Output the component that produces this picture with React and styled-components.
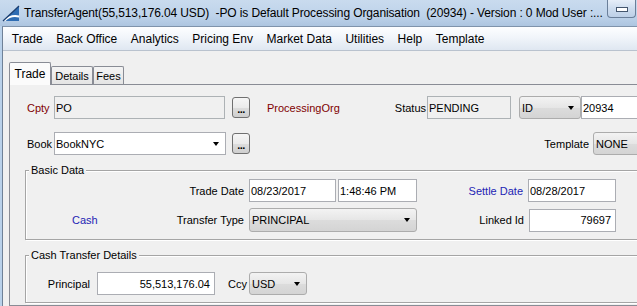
import React from 'react'
import styled, { createGlobalStyle, css } from 'styled-components'

const GlobalStyle = createGlobalStyle`
  html, body {
    margin: 0;
    padding: 0;
    background: #f0f0f0;
    overflow: hidden;
  }
  #root {
    width: 637px;
    height: 306px;
  }
`

const Window = styled.div`
  width: 637px;
  height: 306px;
  overflow: hidden;
  display: flex;
  flex-direction: column;
  background: #b9d1ea;
  font-family: "Liberation Sans", Arial, sans-serif;
  color: #000;
`

const TitleBar = styled.div`
  height: 26px;
  flex-shrink: 0;
  display: flex;
  align-items: center;
  background: linear-gradient(#c9dbee, #bed3ea 60%, #adc5e0);
`

const AppIcon = styled.svg`
  flex-shrink: 0;
  margin: 0 4px 0 2px;
`

const TitleText = styled.div`
  flex: 1;
  min-width: 0;
  font-size: 12px;
  letter-spacing: -0.12px;
  white-space: pre;
`

const CaptionButton = styled.div`
  flex-shrink: 0;
  align-self: flex-start;
  width: 29px;
  height: 18px;
  margin-right: 1px;
  box-sizing: border-box;
  border: 1px solid #6a7f99;
  border-top: none;
  border-radius: 0 0 4px 4px;
  background: linear-gradient(#e6eef8, #cddcee 50%, #bdd0e7);
  display: flex;
  align-items: flex-end;
  justify-content: center;
  padding-bottom: 5px;

  span {
    width: 10px;
    height: 3px;
    background: #fff;
    border: 1px solid #44566e;
  }
`

const Frame = styled.div`
  flex: 1;
  display: flex;
  padding-left: 2px;
  min-height: 0;
`

const Client = styled.div`
  flex: 1;
  min-width: 0;
  display: flex;
  flex-direction: column;
  background: #f0f0f0;
  border-left: 1px solid #6f8197;
  border-top: 1px solid #7f93ab;
`

const MenuBar = styled.div`
  height: 23px;
  flex-shrink: 0;
  display: flex;
  align-items: center;
  padding-left: 2px;
  border-bottom: 1px solid #b9c2ce;
  background: linear-gradient(#fdfeff, #f1f5fa 45%, #dfe7f1);
`

const MenuItem = styled.div`
  padding: 0 6.75px;
  font-size: 12px;
  white-space: nowrap;
`

const TabArea = styled.div`
  flex: 1;
  display: flex;
  flex-direction: column;
  padding: 11px 0 0 6px;
`

const TabStrip = styled.div`
  display: flex;
  align-items: flex-end;
`

const Tab = styled.div`
  box-sizing: border-box;
  width: ${p => p.$w}px;
  border: 1px solid #898c95;
  border-bottom: none;
  border-radius: 2px 2px 0 0;
  display: flex;
  align-items: center;
  justify-content: center;
  white-space: nowrap;
  ${p => p.$active ? css`
    height: 23px;
    margin-bottom: -1px;
    position: relative;
    z-index: 1;
    font-size: 12px;
    background: #fbfbfb;
  ` : css`
    height: 18px;
    font-size: 11px;
    background: linear-gradient(#f4f4f4, #e4e4e4);
  `}
`

const Panel = styled.div`
  flex: 1;
  width: 700px;
  border: 1px solid #898c95;
  border-right: none;
  background: #f0f0f0;
  padding-top: 11px;
  font-size: 11px;
`

const Row = styled.div`
  display: flex;
  align-items: center;
  height: ${p => p.$h || 23}px;
  margin-top: ${p => p.$mt || 0}px;
  padding-left: ${p => p.$pl || 0}px;
`

const tones = { red: '#800000', blue: '#1e1eb4', plain: '#000' }

const Label = styled.div`
  flex-shrink: 0;
  box-sizing: border-box;
  width: ${p => p.$w}px;
  margin-left: ${p => p.$ml || 0}px;
  text-align: ${p => (p.$right ? 'right' : 'left')};
  padding-right: ${p => (p.$right ? 1 : 0)}px;
  color: ${p => tones[p.$tone || 'plain']};
  white-space: nowrap;
`

const Field = styled.div`
  flex-shrink: 0;
  box-sizing: border-box;
  width: ${p => p.$w}px;
  height: ${p => p.$h || 23}px;
  margin-left: ${p => p.$ml || 0}px;
  padding: 0 4px 0 1px;
  display: flex;
  align-items: center;
  justify-content: ${p => (p.$right ? 'flex-end' : 'flex-start')};
  border: 1px solid ${p => (p.$disabled ? '#adb2b5' : '#abadb3')};
  background: ${p => (p.$disabled ? '#f0f0f0' : '#fff')};
  white-space: nowrap;
  overflow: hidden;
`

const Combo = styled.div`
  flex-shrink: 0;
  box-sizing: border-box;
  width: ${p => p.$w}px;
  height: ${p => p.$h || 23}px;
  margin-left: ${p => p.$ml || 0}px;
  padding: 0 6px 0 2px;
  display: flex;
  align-items: center;
  justify-content: space-between;
  white-space: nowrap;
  ${p => p.$editable ? css`
    border: 1px solid #abadb3;
    padding-left: 1px;
    background: #fff;
  ` : css`
    border: 1px solid #acacac;
    border-radius: 3px;
    background: linear-gradient(#f3f3f3, #e6e6e6 50%, #dcdcdc 52%, #d4d4d4);
  `}
`

const Arrow = styled.span`
  width: 0;
  height: 0;
  border-left: 3.5px solid transparent;
  border-right: 3.5px solid transparent;
  border-top: 4px solid #000;
`

const Ellipsis = styled.div`
  flex-shrink: 0;
  box-sizing: border-box;
  width: 18px;
  height: 21px;
  margin-left: ${p => p.$ml || 0}px;
  border: 1px solid #707070;
  border-radius: 3px;
  background: linear-gradient(#f6f6f6, #ebebeb 50%, #dddddd 52%, #cfcfcf);
  display: flex;
  align-items: center;
  justify-content: center;
  font-size: 11px;
  font-weight: bold;
  letter-spacing: -0.5px;
  line-height: 1;
  padding-top: 3px;
`

const Group = styled.fieldset`
  width: 640px;
  margin: 9px 0 0 15px;
  padding: ${p => p.$pad};
  min-width: 0;
  border: 1px solid #a5a5a5;
  box-shadow: inset 1px 1px 0 #fff, 1px 1px 0 #fff;
`

const Legend = styled.legend`
  margin-left: 3px;
  padding: 0 2px 0 2px;
  font-size: 11px;
  line-height: 13px;
  background: #f0f0f0;
`

function AppLogo() {
  return (
    <AppIcon width="18" height="18" viewBox="0 0 18 18">
      <path d="M1 17 L17 2 L17 17 Z" fill="#2f6db3" />
      <path d="M1 17 Q8 9.5 17 11.5 L17 13.5 Q9 11.5 3.5 17 Z" fill="#ffffff" />
      <path d="M1 17 L17 2" stroke="#1b3d6e" strokeWidth="1.2" />
    </AppIcon>
  )
}

const menus = ['Trade', 'Back Office', 'Analytics', 'Pricing Env', 'Market Data', 'Utilities', 'Help', 'Template']

export default function App() {
  return (
    <>
      <GlobalStyle />
      <Window>
        <TitleBar>
          <AppLogo />
          <TitleText>
            {'TransferAgent(55,513,176.04 USD)  -PO is Default Processing Organisation  (20934) - Version : 0 Mod User :...'}
          </TitleText>
          <CaptionButton><span /></CaptionButton>
        </TitleBar>

        <Frame>
          <Client>
            <MenuBar>
              {menus.map(m => <MenuItem key={m}>{m}</MenuItem>)}
            </MenuBar>

            <TabArea>
              <TabStrip>
                <Tab $w={42} $active>Trade</Tab>
                <Tab $w={42}>Details</Tab>
                <Tab $w={31}>Fees</Tab>
              </TabStrip>

              <Panel>
                <Row $pl={17}>
                  <Label $w={27} $tone="red">Cpty</Label>
                  <Field $w={171} $disabled>PO</Field>
                  <Ellipsis $ml={7}>...</Ellipsis>
                  <Label $w={127} $ml={17} $tone="red">ProcessingOrg</Label>
                  <Label $w={33} $right>Status</Label>
                  <Field $w={84} $disabled>PENDING</Field>
                  <Combo $w={62} $ml={8}>ID<Arrow /></Combo>
                  <Field $w={80}>20934</Field>
                </Row>

                <Row $pl={17} $mt={13}>
                  <Label $w={27}>Book</Label>
                  <Combo $w={172} $editable>BookNYC<Arrow /></Combo>
                  <Ellipsis $ml={6}>...</Ellipsis>
                  <Label $w={340} $right>Template</Label>
                  <Combo $w={80} $ml={3}>NONE<Arrow /></Combo>
                </Row>

                <Group $pad="2px 0 7px 0">
                  <Legend>Basic Data</Legend>
                  <Row>
                    <Label $w={219} $right>Trade Date</Label>
                    <Field $w={87} $ml={4}>08/23/2017</Field>
                    <Field $w={79} $ml={2}>1:48:46 PM</Field>
                    <Label $w={107} $right $tone="blue">Settle Date</Label>
                    <Field $w={88} $ml={4}>08/28/2017</Field>
                  </Row>
                  <Row $mt={6} $h={24}>
                    <Label $w={32} $ml={46} $tone="blue">Cash</Label>
                    <Label $w={141} $right>Transfer Type</Label>
                    <Combo $w={168} $h={24} $ml={4}>PRINCIPAL<Arrow /></Combo>
                    <Label $w={108} $right>Linked Id</Label>
                    <Field $w={87} $ml={4} $right>79697</Field>
                  </Row>
                </Group>

                <Group $pad="10px 0 7px 0">
                  <Legend>Cash Transfer Details</Legend>
                  <Row>
                    <Label $w={65} $right>Principal</Label>
                    <Field $w={118} $ml={6} $right>55,513,176.04</Field>
                    <Label $w={19} $ml={13}>Ccy</Label>
                    <Combo $w={58} $ml={2}>USD<Arrow /></Combo>
                  </Row>
                </Group>
              </Panel>
            </TabArea>
          </Client>
        </Frame>
      </Window>
    </>
  )
}
